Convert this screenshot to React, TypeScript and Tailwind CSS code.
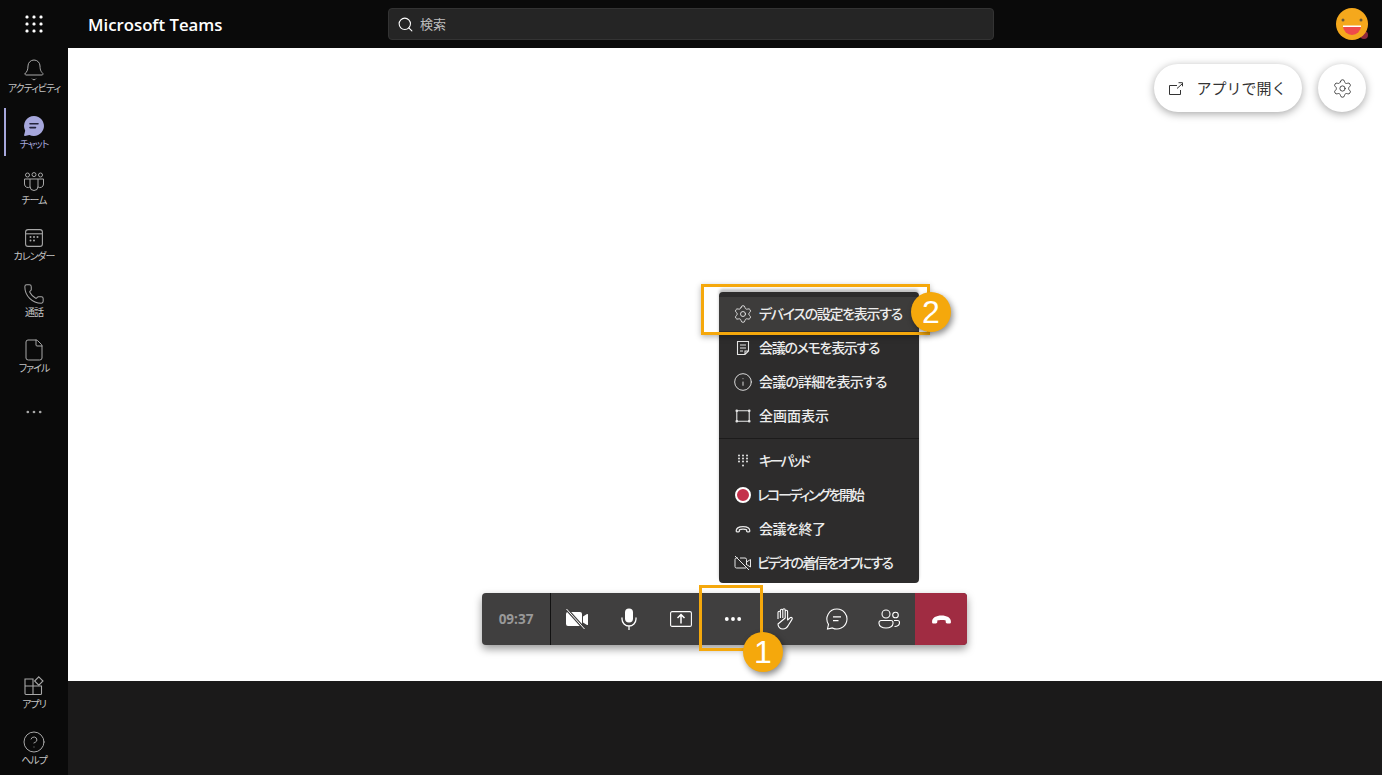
import { Bell, CircleHelp, File, Info, Phone, Search, Settings } from "lucide-react";
import type { ReactNode } from "react";

function Dots({ size = 16, r = 1.5, color = "currentColor" }: { size?: number; r?: number; color?: string }) {
    return (
        <svg width={size} height={size} viewBox="0 0 16 16" fill={color}>
            <circle cx="2.5" cy="8" r={r} />
            <circle cx="8" cy="8" r={r} />
            <circle cx="13.5" cy="8" r={r} />
        </svg>
    );
}

function Waffle() {
    const points = [2, 9, 16];
    return (
        <svg width="18" height="18" viewBox="0 0 18 18" fill="#fff">
            {points.map((y) => points.map((x) => <rect key={`${x}-${y}`} x={x - 1.5} y={y - 1.5} width="3" height="3" rx="1.2" />))}
        </svg>
    );
}

function ChatFilled() {
    return (
        <svg width="22" height="22" viewBox="0 0 22 22">
            <path d="M11 1a10 10 0 1 1-4.6 18.9L2 21c-.6.1-1-.3-.9-.9l1.1-4.4A10 10 0 0 1 11 1z" fill="#a6a7dc" />
            <path d="M7 8.800h8M7 12.600h5.500" stroke="#23233a" strokeWidth="1.6" strokeLinecap="round" />
        </svg>
    );
}

function Team() {
    return (
        <svg width="22" height="20" viewBox="0 0 22 20" fill="none" stroke="#a8a8a8" strokeWidth="1">
            <circle cx="4.500" cy="3" r="2" />
            <circle cx="11" cy="2.600" r="2" />
            <circle cx="17.500" cy="3" r="2" />
            <path d="M7 7h8v7.500a4 4 0 0 1-8 0z" />
            <path d="M7 7H1.500v5a3.500 3.500 0 0 0 5.800 2.700M15 7h5.500v5a3.500 3.500 0 0 1-5.800 2.700" />
        </svg>
    );
}

function Calendar() {
    return (
        <svg width="18" height="18" viewBox="0 0 18 18" fill="none" stroke="#a8a8a8" strokeWidth="1.1">
            <rect x="0.600" y="0.600" width="16.800" height="16.800" rx="2.500" />
            <path d="M1 4.800h16" />
            <g fill="#a8a8a8" stroke="none">
                <circle cx="5.500" cy="8" r="1" />
                <circle cx="9" cy="8" r="1" />
                <circle cx="12.500" cy="8" r="1" />
                <circle cx="5.500" cy="11.500" r="1" />
                <circle cx="9" cy="11.500" r="1" />
            </g>
        </svg>
    );
}

function Apps() {
    return (
        <svg width="20" height="20" viewBox="0 0 20 20" fill="none" stroke="#a8a8a8" strokeWidth="1.1">
            <path d="M1 3h8v7H1zM1 10h8v8.500H2a1 1 0 0 1-1-1zM9 10h8.500v7.500a1 1 0 0 1-1 1H9z" />
            <path d="M14.800 0.800l4.200 4.200-4.200 4.200-4.200-4.200z" />
        </svg>
    );
}

function HangUp({ size = 20, color = "#fff", filled = true }: { size?: number; color?: string; filled?: boolean }) {
    return (
        <svg width={size} height={size * 0.5} viewBox="0 0 20 10">
            {filled ? (
                <path d="M1 7.500C1 3.500 5 1.500 10 1.500s9 2 9 6c0 1-.6 1.500-1.400 1.500h-2.200c-.8 0-1.400-.5-1.400-1.300V6.300C12.600 5.600 7.400 5.600 6 6.300v1.400C6 8.500 5.400 9 4.600 9H2.400C1.600 9 1 8.500 1 7.500z" fill={color} />
            ) : (
                <path d="M1.500 7.500C1.500 3.900 5.500 2 10 2s8.500 1.900 8.500 5.500c0 .6-.4 1-1 1h-2c-.6 0-1-.4-1-1V6C13 5 7 5 5.500 6v1.500c0 .6-.4 1-1 1h-2c-.6 0-1-.4-1-1z" fill="none" stroke={color} strokeWidth="1.6" />
            )}
        </svg>
    );
}

function SideItem({ icon, label, active = false }: { icon: ReactNode; label: string; active?: boolean }) {
    return (
        <div className="relative h-14 flex flex-col items-center">
            {active && <div className="absolute left-1 top-1 w-0.5 h-12 bg-[#a6a7dc]" />}
            <div className="h-[25px] mt-[9px] flex items-center justify-center">{icon}</div>
            <div className={`text-[10px] leading-3 tracking-[-1px] ${active ? "text-[#a6a7dc]" : "text-[#c4c4c4]"}`}>{label}</div>
        </div>
    );
}

function MenuRow({ icon, label, hovered = false, gap = "ml-[6px]", tracking }: { icon: ReactNode; label: string; hovered?: boolean; gap?: string; tracking: string }) {
    return (
        <div className={`h-[34px] flex items-center pl-[14px] ${hovered ? "bg-[#3d3c3b]" : ""}`}>
            <div className="w-5 flex justify-center text-[#e6e6e6]">{icon}</div>
            <div className={`${gap} ${tracking} pb-0.5 text-[14px] font-medium text-[#ececec] whitespace-nowrap`}>{label}</div>
        </div>
    );
}

function ToolButton({ children }: { children: ReactNode }) {
    return <div className="w-[52px] h-full flex items-center justify-center text-white">{children}</div>;
}

function Badge({ value, className }: { value: string; className: string }) {
    return (
        <div className={`absolute w-10 h-10 rounded-full bg-[#f5a80c] text-white text-[32px] leading-10 text-center font-['Liberation_Sans',sans-serif] shadow-[2px_3px_6px_rgba(0,0,0,0.45)] ${className}`}>
            {value}
        </div>
    );
}

export default function App() {
    return (
        <div className="w-[1382px] h-[775px] overflow-hidden flex flex-col bg-[#0a0a0a] font-['Noto_Sans_CJK_JP','Noto_Sans',sans-serif] [font-feature-settings:'palt']">
            <header className="h-12 shrink-0 flex items-center relative">
                <div className="w-[68px] flex justify-center">
                    <Waffle />
                </div>
                <div className="ml-5 mt-0.5 text-white text-[16.800px] font-semibold font-['Open_Sans',sans-serif]">Microsoft Teams</div>
                <div className="absolute left-[388px] top-2 w-[606px] h-8 bg-[#252525] rounded-sm border border-[#333] flex items-center pl-2 gap-1.5">
                    <Search size={17} strokeWidth={1.5} className="text-white" />
                    <span className="text-[13px] text-[#bdbdbd]">検索</span>
                </div>
                <div className="absolute left-[1336px] top-2 w-8 h-8">
                    <svg width="32" height="32" viewBox="0 0 32 32" overflow="visible">
                        <circle cx="28" cy="27" r="4" fill="#8c2a3c" />
                        <circle cx="16" cy="16" r="16" fill="#f5a81c" />
                        <circle cx="7" cy="12" r="1.500" fill="#6b5a3a" />
                        <circle cx="25" cy="12" r="1.500" fill="#6b5a3a" />
                        <path d="M7 18h18a9 9 0 0 1-18 0z" fill="#ef4a4a" />
                        <path d="M7 17.500h18v1.500H7z" fill="#fff" />
                    </svg>
                </div>
            </header>

            <div className="flex-1 flex min-h-0">
                <aside className="w-[68px] shrink-0 flex flex-col justify-between text-[#a8a8a8]">
                    <div>
                        <SideItem icon={<Bell size={24} strokeWidth={1} />} label="アクティビティ" />
                        <SideItem icon={<ChatFilled />} label="チャット" active />
                        <SideItem icon={<Team />} label="チーム" />
                        <SideItem icon={<Calendar />} label="カレンダー" />
                        <SideItem icon={<Phone size={22} strokeWidth={1.1} />} label="通話" />
                        <SideItem icon={<File size={24} strokeWidth={1} />} label="ファイル" />
                        <div className="h-14 flex items-center justify-center">
                            <Dots size={18} r={1.2} color="#a8a8a8" />
                        </div>
                    </div>
                    <div className="mb-[-1px]">
                        <SideItem icon={<Apps />} label="アプリ" />
                        <SideItem icon={<CircleHelp size={24} strokeWidth={1} />} label="ヘルプ" />
                    </div>
                </aside>

                <main className="flex-1 flex flex-col min-w-0">
                    <div className="relative h-[633px] bg-white">
                        <div className="absolute top-4 right-4 flex items-center gap-4">
                            <div className="w-[148px] h-12 rounded-full bg-white shadow-[0_2px_8px_rgba(0,0,0,0.35)] flex items-center justify-center gap-3 text-[#333]">
                                <svg width="15" height="13" viewBox="0 0 15 13" fill="none" stroke="#333" strokeWidth="1">
                                    <path d="M8 3.500H0.500v9h11V8M8 6.500l5-4.500M9.500 .7h4v3.600" />
                                </svg>
                                <span className="text-[15px] whitespace-nowrap [font-feature-settings:normal]">アプリで開く</span>
                            </div>
                            <div className="w-12 h-12 rounded-full bg-white shadow-[0_2px_8px_rgba(0,0,0,0.35)] flex items-center justify-center">
                                <Settings size={21} strokeWidth={1} className="text-[#333]" />
                            </div>
                        </div>

                        {/* more menu */}
                        <div className="absolute left-[651px] top-[244px] w-[200px] h-[291px] bg-[#2d2c2c] rounded-sm pt-[5px] shadow-[0_-3px_3px_rgba(0,0,0,0.25)]">
                            <MenuRow hovered tracking="tracking-[-1.300px]" icon={<Settings size={20} strokeWidth={1.1} />} label="デバイスの設定を表示する" />
                            <MenuRow
                                tracking="tracking-[-1.300px]"
                                icon={
                                    <svg width="14" height="16" viewBox="0 0 14 16" fill="none" stroke="currentColor" strokeWidth="1.1">
                                        <path d="M1.500 1.500h11v9.500l-3.500 3.500h-7.500zM9 14.500V11h3.500M4 5h6M4 8h6M4 11h3" />
                                    </svg>
                                }
                                label="会議のメモを表示する"
                            />
                            <MenuRow tracking="tracking-[-0.800px]" icon={<Info size={20} strokeWidth={1.1} />} label="会議の詳細を表示する" />
                            <MenuRow
                                tracking="tracking-normal"
                                icon={
                                    <svg width="16" height="14" viewBox="0 0 16 14" fill="none" stroke="currentColor" strokeWidth="1.1">
                                        <rect x="1.800" y="1.800" width="12.400" height="10.400" rx="1" />
                                        <g fill="currentColor" stroke="none">
                                            <rect x="0.500" y="0.500" width="2.500" height="2.500" rx="1" />
                                            <rect x="13" y="0.500" width="2.500" height="2.500" rx="1" />
                                            <rect x="0.500" y="11" width="2.500" height="2.500" rx="1" />
                                            <rect x="13" y="11" width="2.500" height="2.500" rx="1" />
                                        </g>
                                    </svg>
                                }
                                label="全画面表示"
                            />
                            <div className="h-px bg-[#1c1b1b] my-[5px]" />
                            <MenuRow
                                tracking="tracking-[-2.600px]"
                                icon={
                                    <svg width="12" height="14" viewBox="0 0 12 14" fill="currentColor">
                                        {[1.500, 4.500, 7.500].map((y) => [2, 6, 10].map((x) => <circle key={`${x}-${y}`} cx={x} cy={y} r="1" />))}
                                        <circle cx="6" cy="11.500" r="1" />
                                    </svg>
                                }
                                label="キーパッド"
                            />
                            <MenuRow
                                gap="ml-[4px]"
                                tracking="tracking-[-2.300px]"
                                icon={<div className="w-4 h-4 rounded-full border-2 border-white bg-[#c4314b]" />}
                                label="レコーディングを開始"
                            />
                            <MenuRow tracking="tracking-[-0.500px]" icon={<HangUp size={16} color="#e6e6e6" filled={false} />} label="会議を終了" />
                            <MenuRow
                                gap="ml-[4px]"
                                tracking="tracking-[-1.800px]"
                                icon={
                                    <svg width="18" height="16" viewBox="0 0 18 16" fill="none" stroke="currentColor" strokeWidth="1">
                                        <path d="M4 3H2.500a1.500 1.500 0 0 0-1.500 1.500v7A1.500 1.500 0 0 0 2.500 13H12M12.500 10V4.500A1.500 1.500 0 0 0 11 3H6M12.500 7l4-2.500v7.500l-4-2.500M1 1l14 14" />
                                    </svg>
                                }
                                label="ビデオの着信をオフにする"
                            />
                        </div>

                        {/* call toolbar */}
                        <div className="absolute left-[414px] top-[545px] w-[485px] h-[52px] bg-[#403f3f] rounded-sm flex shadow-[0_4px_8px_rgba(0,0,0,0.4)] overflow-hidden">
                            <div className="w-[68px] flex items-center justify-center text-[13.500px] font-bold text-[#999] font-['Open_Sans',sans-serif] border-r border-[#111] box-content">09:37</div>
                            <ToolButton>
                                <svg width="24" height="22" viewBox="0 0 24 22">
                                    <path d="M3 4h12a2 2 0 0 1 2 2v10a2 2 0 0 1-2 2H3a2 2 0 0 1-2-2V6a2 2 0 0 1 2-2zM18 8.500l4-2.500c.6-.3 1 0 1 .6v9.800c0 .6-.4.9-1 .6l-4-2.500z" fill="#fff" />
                                    <path d="M1.500 1l18 20" stroke="#403f3f" strokeWidth="3" />
                                    <path d="M1.500 1l18 20" stroke="#fff" strokeWidth="1" />
                                </svg>
                            </ToolButton>
                            <ToolButton>
                                <svg width="16" height="22" viewBox="0 0 16 22" fill="none" stroke="#fff" strokeWidth="1.300">
                                    <rect x="4" y="0.500" width="8" height="14" rx="4" fill="#fff" stroke="none" />
                                    <path d="M1 10v1a7 7 0 0 0 14 0v-1M8 18v4" strokeLinecap="round" />
                                </svg>
                            </ToolButton>
                            <ToolButton>
                                <svg width="22" height="16" viewBox="0 0 22 16" fill="none" stroke="#fff" strokeWidth="1.100">
                                    <rect x="0.600" y="0.600" width="20.800" height="14.800" rx="1.500" />
                                    <path d="M11 12.500V3.500M7.500 7L11 3.500 14.500 7" strokeWidth="1.500" />
                                </svg>
                            </ToolButton>
                            <ToolButton>
                                <Dots size={18} r={1.7} color="#fff" />
                            </ToolButton>
                            <ToolButton>
                                <svg width="20" height="22" viewBox="0 0 20 22" fill="none" stroke="#fff" strokeWidth="1.100" strokeLinejoin="round">
                                    <path d="M3 11V4.500a1.200 1.200 0 0 1 2.400 0V10M5.400 10V2.500a1.200 1.200 0 0 1 2.400 0V10M7.800 10V2a1.200 1.200 0 0 1 2.400 0v8M10.200 10V3.500a1.200 1.200 0 0 1 2.400 0V12l2.500-2.200c1.300-1 2.800.4 1.900 1.600l-3.500 5.600C12.200 19.600 10.500 21 8 21c-3 0-5-2-5-5z" />
                                </svg>
                            </ToolButton>
                            <ToolButton>
                                <svg width="22" height="22" viewBox="0 0 22 22" fill="none" stroke="#fff" strokeWidth="1.100">
                                    <path d="M11 1a10 10 0 1 1-4.600 18.900L1.500 21l1-4.600A10 10 0 0 1 11 1z" />
                                    <path d="M7 8.800h8M7 12.600h5.500" strokeWidth="1.200" />
                                </svg>
                            </ToolButton>
                            <ToolButton>
                                <svg width="22" height="20" viewBox="0 0 22 20" fill="none" stroke="#fff" strokeWidth="1.100">
                                    <circle cx="8" cy="5" r="4" />
                                    <circle cx="17.500" cy="6" r="2.800" />
                                    <path d="M1 13.500a2 2 0 0 1 2-2h10a2 2 0 0 1 2 2v1c0 2.500-3 4.500-7 4.500s-7-2-7-4.500zM16 11.500h3.500a2 2 0 0 1 2 2c0 2.500-2 4-5 4" />
                                </svg>
                            </ToolButton>
                            <div className="flex-1 bg-[#a02c42] flex items-center justify-center">
                                <HangUp size={21} />
                            </div>
                        </div>

                        {/* callouts */}
                        <div className="absolute left-[631px] top-[537px] w-[64px] h-[66px] border-[3px] border-[#f5a80c]" />
                        <div className="absolute left-[633px] top-[236px] w-[229px] h-[51px] border-[3px] border-[#f5a80c] shadow-[0_2px_6px_rgba(0,0,0,0.3)]" />
                        <Badge value="1" className="left-[675px] top-[584px]" />
                        <Badge value="2" className="left-[843px] top-[244px]" />
                    </div>
                    <div className="flex-1 bg-[#1b1a1a]" />
                </main>
            </div>
        </div>
    );
}
